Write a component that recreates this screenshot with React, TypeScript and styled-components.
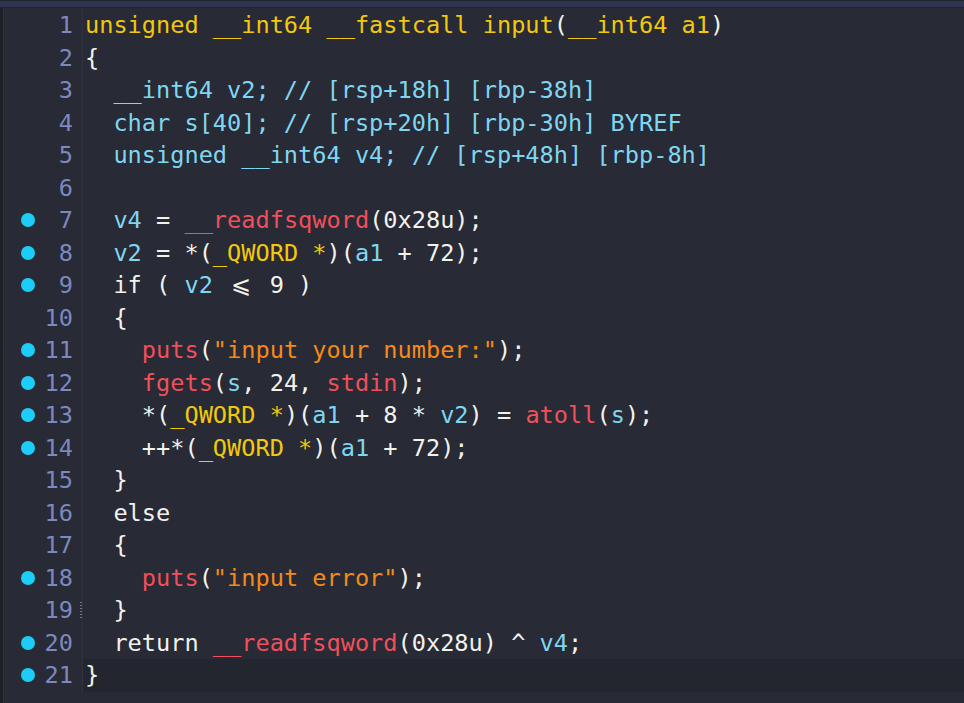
import React from "react";
import styled, { createGlobalStyle } from "styled-components";

const Global = createGlobalStyle`
  html, body { margin: 0; padding: 0; background: #282a36; }
  body { overflow: hidden; }
`;

type Kind = "w" | "y" | "c" | "r" | "o";
type Tok = [Kind, string];

const colors: Record<Kind, string> = {
  w: "#f2f2ec",
  y: "#f2c80c",
  c: "#7fd6f0",
  r: "#f0505a",
  o: "#f58a1a",
};

const lines: { toks: Tok[]; dot?: boolean; fold?: boolean; current?: boolean }[] = [
  { toks: [["y", "unsigned __int64 __fastcall input"], ["w", "("], ["y", "__int64 a1"], ["w", ")"]] },
  { toks: [["w", "{"]] },
  { toks: [["c", "  __int64 v2; // [rsp+18h] [rbp-38h]"]] },
  { toks: [["c", "  char s[40]; // [rsp+20h] [rbp-30h] BYREF"]] },
  { toks: [["c", "  unsigned __int64 v4; // [rsp+48h] [rbp-8h]"]] },
  { toks: [] },
  { dot: true, toks: [["c", "  v4"], ["w", " = "], ["r", "__readfsqword"], ["w", "(0x28u);"]] },
  { dot: true, toks: [["c", "  v2"], ["w", " = *("], ["y", "_QWORD *"], ["w", ")("], ["c", "a1"], ["w", " + 72);"]] },
  { dot: true, toks: [["w", "  if ( "], ["c", "v2"], ["w", " \u2A7D 9 )"]] },
  { toks: [["w", "  {"]] },
  { dot: true, toks: [["r", "    puts"], ["w", "("], ["o", "\"input your number:\""], ["w", ");"]] },
  { dot: true, toks: [["r", "    fgets"], ["w", "("], ["c", "s"], ["w", ", 24, "], ["r", "stdin"], ["w", ");"]] },
  { dot: true, toks: [["w", "    *("], ["y", "_QWORD *"], ["w", ")("], ["c", "a1"], ["w", " + 8 * "], ["c", "v2"], ["w", ") = "], ["r", "atoll"], ["w", "("], ["c", "s"], ["w", ");"]] },
  { dot: true, toks: [["w", "    ++*("], ["y", "_QWORD *"], ["w", ")("], ["c", "a1"], ["w", " + 72);"]] },
  { toks: [["w", "  }"]] },
  { toks: [["w", "  else"]] },
  { toks: [["w", "  {"]] },
  { dot: true, toks: [["r", "    puts"], ["w", "("], ["o", "\"input error\""], ["w", ");"]] },
  { fold: true, toks: [["w", "  }"]] },
  { dot: true, toks: [["w", "  return "], ["r", "__readfsqword"], ["w", "(0x28u) ^ "], ["c", "v4"], ["w", ";"]] },
  { dot: true, current: true, toks: [["w", "}"]] },
];

const Window = styled.div`
  width: 964px;
  height: 703px;
  display: flex;
  flex-direction: column;
  background: #282a36;
  overflow: hidden;
`;

const TopBar = styled.div`
  height: 6px;
  flex: none;
  background: #2e3352;
  border-top: 1px solid #22242c;
  border-bottom: 1px solid #21232b;
`;

const Main = styled.div`
  flex: 1;
  display: flex;
`;

const LeftEdge = styled.div`
  width: 3px;
  flex: none;
  background: #1e2027;
  border-right: 1px solid #1f3a34;
`;

const Code = styled.div`
  flex: 1;
  display: flex;
  flex-direction: column;
  padding-top: 1px;
  font-family: "DejaVu Sans Mono", "Liberation Mono", monospace;
  font-size: 23.6px;
`;

const Row = styled.div`
  display: flex;
  height: 32.5px;
  line-height: 32.5px;
  align-items: center;
`;

const Marker = styled.div`
  width: 36px;
  flex: none;
  display: flex;
  justify-content: center;
  align-items: center;
  padding-left: 12px;
  box-sizing: border-box;
`;

const Dot = styled.span<{ $on: boolean }>`
  flex: none;
  width: 14px;
  height: 14px;
  border-radius: 50%;
  background: ${(p) => (p.$on ? "#1ccdf8" : "transparent")};
`;

const LineNo = styled.div`
  width: 36px;
  flex: none;
  box-sizing: border-box;
  text-align: right;
  color: #7d88bf;
  padding-right: 3px;
`;

const Fold = styled.div<{ $on: boolean }>`
  width: 7px;
  height: 100%;
  flex: none;
  box-sizing: border-box;
  display: flex;
  align-items: center;
  padding-left: 4px;
  border-right: 1px solid #30333f;
  &::before {
    content: "";
    display: ${(p) => (p.$on ? "block" : "none")};
    width: 2px;
    height: 16px;
    background: repeating-linear-gradient(#777a86 0 1px, transparent 1px 3px);
  }
`;

const Text = styled.div<{ $current: boolean }>`
  flex: 1;
  height: 100%;
  padding-left: 2px;
  white-space: pre;
  background: ${(p) => (p.$current ? "#23252f" : "transparent")};
`;

const Tk = styled.span<{ $k: Kind }>`
  color: ${(p) => colors[p.$k]};
`;

const Lig = styled.span`
  display: inline-block;
  width: 2ch;
  text-align: center;
`;

function renderTok(t: Tok, i: number) {
  const [k, s] = t;
  if (s.includes("\u2A7D")) {
    const [a, b] = s.split("\u2A7D");
    return (
      <Tk key={i} $k={k}>
        {a}
        <Lig>{"\u2A7D"}</Lig>
        {b}
      </Tk>
    );
  }
  return (
    <Tk key={i} $k={k}>
      {s}
    </Tk>
  );
}

export default function App() {
  return (
    <>
      <Global />
      <Window>
        <TopBar />
        <Main>
          <LeftEdge />
          <Code>
            {lines.map((l, i) => (
              <Row key={i}>
                <Marker>
                  <Dot $on={!!l.dot} />
                </Marker>
                <LineNo>{i + 1}</LineNo>
                <Fold $on={!!l.fold} />
                <Text $current={!!l.current}>{l.toks.map(renderTok)}</Text>
              </Row>
            ))}
          </Code>
        </Main>
      </Window>
    </>
  );
}
